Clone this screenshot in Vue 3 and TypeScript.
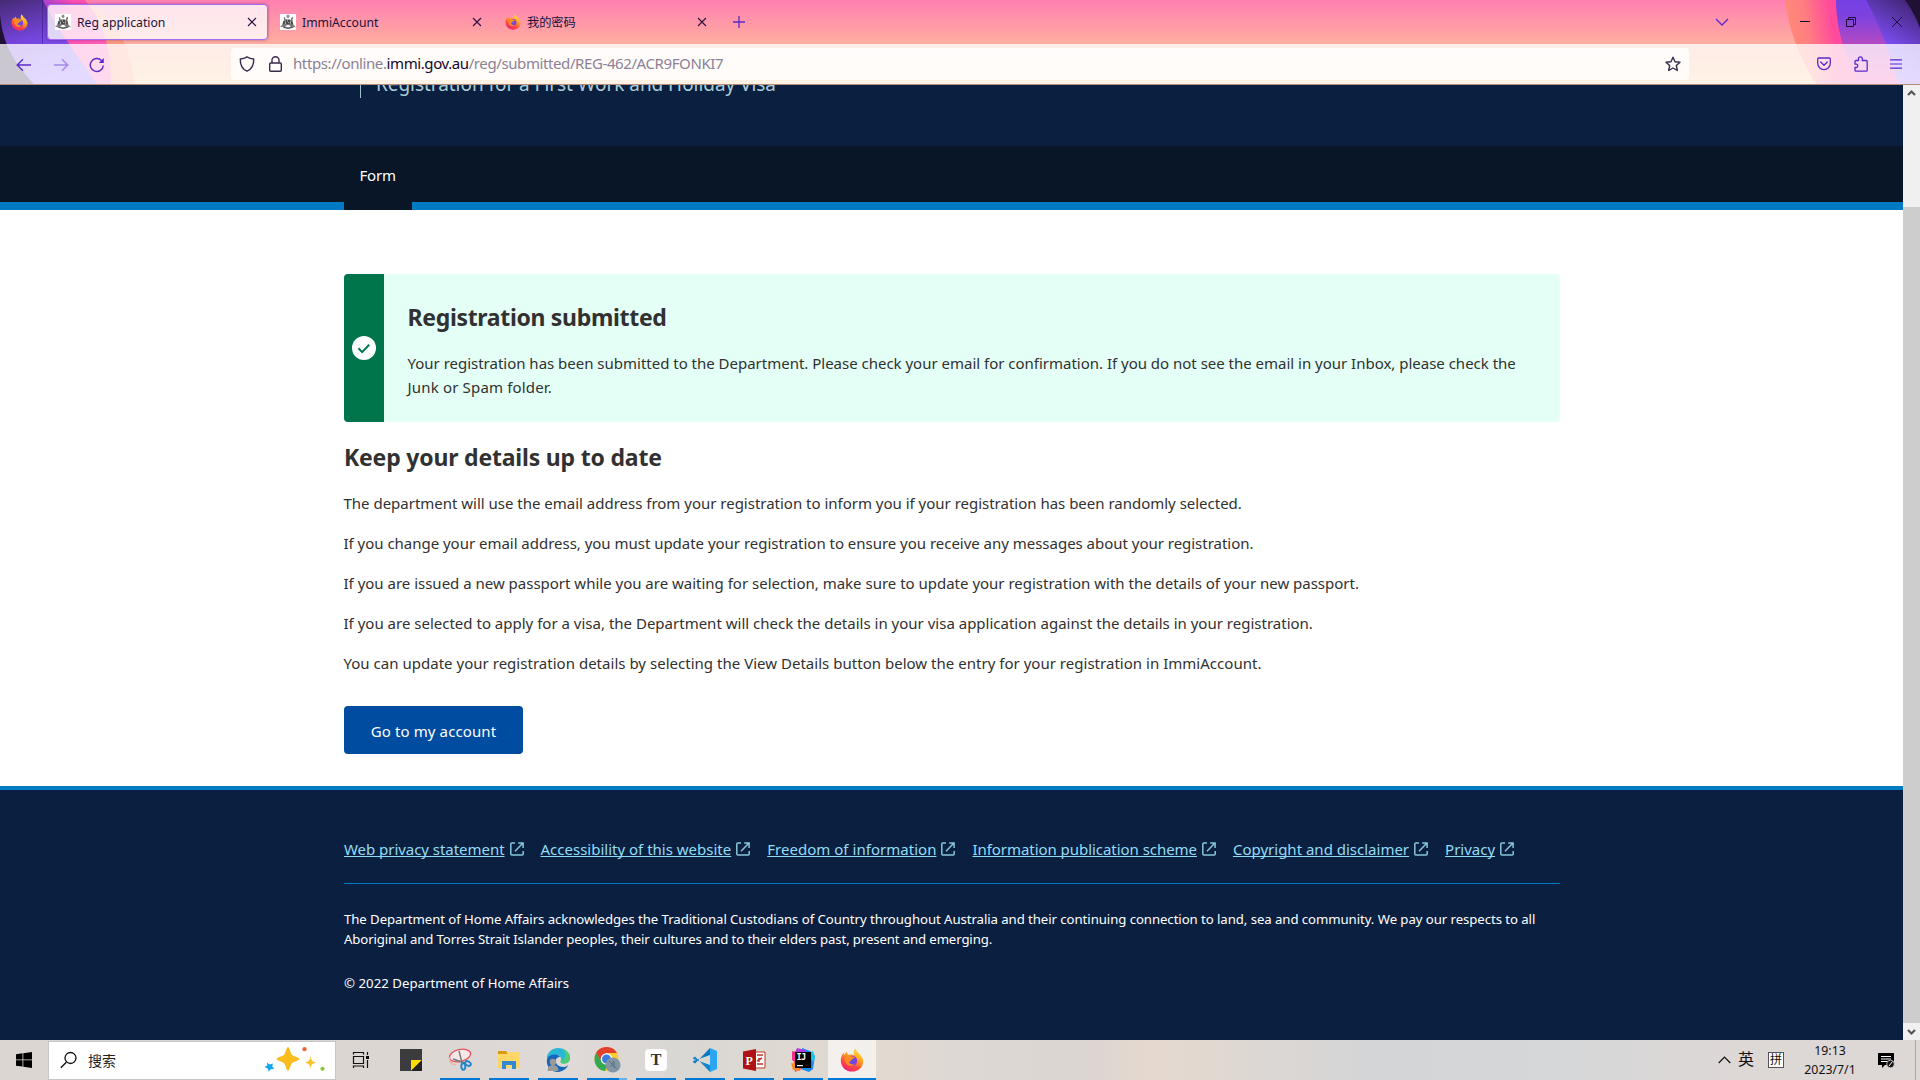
<script setup lang="ts">
interface Tab { title: string; kind: 'crest' | 'fox'; active?: boolean }
interface Item { text: string; cls: string }

const tabs: Tab[] = [
  { title: 'Reg application', kind: 'crest', active: true },
  { title: 'ImmiAccount', kind: 'crest' },
  { title: '我的密码', kind: 'fox' },
]

const paragraphs: Item[] = [
  { text: 'The department will use the email address from your registration to inform you if your registration has been randomly selected.', cls: 'p1' },
  { text: 'If you change your email address, you must update your registration to ensure you receive any messages about your registration.', cls: 'p2' },
  { text: 'If you are issued a new passport while you are waiting for selection, make sure to update your registration with the details of your new passport.', cls: 'p3' },
  { text: 'If you are selected to apply for a visa, the Department will check the details in your visa application against the details in your registration.', cls: 'p4' },
  { text: 'You can update your registration details by selecting the View Details button below the entry for your registration in ImmiAccount.', cls: 'p5' },
]

const links: Item[] = [
  { text: 'Web privacy statement', cls: 'l1' },
  { text: 'Accessibility of this website', cls: 'l2' },
  { text: 'Freedom of information', cls: 'l3' },
  { text: 'Information publication scheme', cls: 'l4' },
  { text: 'Copyright and disclaimer', cls: 'l5' },
  { text: 'Privacy', cls: 'l6' },
]
</script>

<template>
  <div class="screen">
    <svg class="defs" width="0" height="0" aria-hidden="true">
      <defs>
        <linearGradient id="foxBody" x1="0.8" y1="0" x2="0.3" y2="1">
          <stop offset="0" stop-color="#fff04a" /><stop offset="0.4" stop-color="#ffa320" />
          <stop offset="0.72" stop-color="#ff4a3e" /><stop offset="1" stop-color="#e81e80" />
        </linearGradient>
        <radialGradient id="foxGlobe"><stop offset="0" stop-color="#5b4fe8" /><stop offset="1" stop-color="#8a3fd8" /></radialGradient>
        <symbol id="fox" viewBox="0 0 24 24">
          <path fill="url(#foxBody)" d="M12 23.5C5.5 23.5.8 18.6.8 12.4c0-3.3 1.3-6 2.6-7.6l.9 2.4C5 5.500 5.800 4.400 7 3.500c0 1.500.6 2.600 1.600 3.400 2-.7 4.400-.4 5.600.4C13 4.500 13.700 1.800 15.500.2c.6 2.700 2.200 4 4 5.700 2.300 2.200 3.700 4.800 3.700 7.500 0 5.800-4.900 10.100-11.200 10.100z" />
          <circle cx="12" cy="12.800" r="5.200" fill="url(#foxGlobe)" />
          <path fill="#ff8a24" d="M4.500 9.500c2-2.500 5-2.600 7.500-1 1.200.1 2.600.2 3 .7-.4 1.300-2.500 1.600-3.300 2.200-.3 1.600-1.900 1.600-2.600 2.500.6 2 2.600 2.900 5.400 2.200-2 2.700-6.300 2.400-8.200-.3-1.300-1.800-2-4-1.800-6.300z" />
        </symbol>
        <symbol id="crest" viewBox="0 0 16 16">
          <path fill="#fff" d="M0 0h16v16H0z" />
          <path fill="#8c8c8c" d="M6.800 1.200L8 .6l1.200.6.3 1.500L8.500 4h-1l-1-1.300z" />
          <path fill="#777" d="M3.800 3l1.400.4.4 2L7 6v5l-2 1.500-2.500-.3L1.200 13 0 12.500l2-1.200.8-2.800 1.400-2z" />
          <path fill="#777" d="M12.200 2.800l-.9 1-.3 2L9 6v5l2 1.500 3 .2 1.500.8-.3-1.300-1.700-1.200L12.800 8l-.4-2.500.9-1.500z" />
          <path fill="#444" d="M6.200 5.500h3.600v4L8 11.300 6.200 9.500zM3.200 7.500l1.300-1 .3 3-1.600 1zM11.500 6.500l1.200 2v2l-1.500-.8z" />
          <path fill="#555" d="M1.500 12.600l3-.3L8 13.600l3.500-1.300 3 .5-2.200 1.300L8 15l-4-.9z" />
          <path fill="#d8d8d8" d="M7 6.300h.8v1.200H7zM8.300 8h.8v1h-.8zM5.200 8h.6v2h-.6zM10.300 7.500h.6v2h-.6zM5.500 12.600h1v.7h-1zM9.600 12.600h1v.7h-1z" />
        </symbol>
        <symbol id="ext" viewBox="0 0 14 14">
          <path fill="none" stroke="#86c5dc" stroke-width="1.500" d="M5 .9H1.800q-1 0-1 1v10q0 1 1 1h10.400q1 0 1-1V9M5 9.300L12.700 1.300M8.200.9h4.900v5" />
        </symbol>
      </defs>
    </svg>

    <header class="chrome">
      <svg class="theme" width="1920" height="84" viewBox="0 0 1920 84" aria-hidden="true">
        <defs>
          <linearGradient id="sky" x1="0" y1="0" x2="0" y2="1"><stop offset="0" stop-color="#ff80b2" /><stop offset="0.520" stop-color="#ffae9f" /><stop offset="1" stop-color="#ffc58a" /></linearGradient>
          <linearGradient id="violetL" x1="0" y1="0" x2="0.300" y2="1"><stop offset="0" stop-color="#452a74" /><stop offset="0.500" stop-color="#7544dc" /><stop offset="1" stop-color="#8a5cff" /></linearGradient>
          <linearGradient id="pinkL" x1="0" y1="0" x2="1" y2="0.600"><stop offset="0" stop-color="#a040d8" /><stop offset="0.350" stop-color="#ff4fb0" /><stop offset="1" stop-color="#ff62b8" /></linearGradient>
          <linearGradient id="orangeR" x1="0" y1="0.200" x2="1" y2="0"><stop offset="0" stop-color="#ff8a78" /><stop offset="0.250" stop-color="#ff7f80" /><stop offset="0.600" stop-color="#ff4a9c" /><stop offset="1" stop-color="#ff4aa4" /></linearGradient>
          <linearGradient id="violetR" x1="0" y1="0" x2="0" y2="1"><stop offset="0" stop-color="#7440e4" /><stop offset="0.200" stop-color="#7d42de" /><stop offset="0.550" stop-color="#b94ac0" /><stop offset="1" stop-color="#ff4ab0" /></linearGradient>
          <linearGradient id="deepR" x1="0.700" y1="0" x2="0.300" y2="1"><stop offset="0" stop-color="#44277a" /><stop offset="0.550" stop-color="#7a4cf0" /><stop offset="1" stop-color="#9f6cff" /></linearGradient>
        </defs>
        <path fill="url(#sky)" d="M0 0h1920v84H0z" />
        <path fill="#ff9a80" d="M60 0h25c25 15 47 42 49 84H60z" />
        <path fill="url(#pinkL)" d="M40 0h45c17 20 26 45 26 84H60z" />
        <path fill="url(#violetL)" d="M0 0h43C52 20 66 40 97 84H0z" />
        <path fill="#1f1134" d="M0 14c2 22 8 43 34 70H0z" />
        <path fill="#3b1d8c" opacity="0.600" d="M42 0h1v44h-1z" />
        <path fill="url(#orangeR)" d="M1785 0h60l15 84h-44C1795 50 1787 20 1785 0z" />
        <path fill="url(#violetR)" d="M1836 0h40l30 84h-46C1843 55 1836 25 1836 0z" />
        <path fill="url(#deepR)" d="M1866 0h54v84h-22C1888 45 1877 20 1866 0z" />
        <path fill="#1f1134" d="M1905 0h15v28q-5-14-15-28z" />
      </svg>
      <div class="tabstrip">
        <svg class="brand" width="17" height="17"><use href="#fox" /></svg>
        <div v-for="t in tabs" :key="t.title" class="tab" :class="{ active: t.active }">
          <svg class="fav" width="16" height="16"><use :href="'#' + t.kind" /></svg>
          <span class="tabname">{{ t.title }}</span>
          <svg class="x" width="10" height="10" viewBox="0 0 10 10"><path d="M1 1l8 8M9 1L1 9" fill="none" stroke="#2b1040" stroke-width="1.100" /></svg>
        </div>
        <svg class="plus" width="12" height="12" viewBox="0 0 12 12"><path d="M6 0v12M0 6h12" stroke="#592acb" stroke-width="1.300" /></svg>
        <svg class="chev" width="14" height="8" viewBox="0 0 14 8"><path d="M1 1l6 6 6-6" fill="none" stroke="#592acb" stroke-width="1.300" /></svg>
        <svg class="wc min" width="10" height="10" viewBox="0 0 10 10"><path d="M0 4.500h10" stroke="#1a0a30" /></svg>
        <svg class="wc" width="10" height="10" viewBox="0 0 10 10"><path d="M.5 2.500h7v7h-7zM2.500 2.500v-2h7v7h-2" fill="none" stroke="#1a0a30" /></svg>
        <svg class="wc" width="10" height="10" viewBox="0 0 10 10"><path d="M0 0l10 10M10 0L0 10" stroke="#1a0a30" stroke-width=".9" /></svg>
      </div>
      <div class="toolbar">
        <svg class="nav1" width="16" height="14" viewBox="0 0 16 14"><path d="M15 7H1.500M7 1.200L1.200 7 7 12.800" fill="none" stroke="#592acb" stroke-width="1.400" /></svg>
        <svg class="nav2" width="16" height="14" viewBox="0 0 16 14"><path d="M1 7h13.500M9 1.200L14.800 7 9 12.800" fill="none" stroke="#592acb" stroke-opacity="0.450" stroke-width="1.400" /></svg>
        <svg class="nav3" width="16" height="16" viewBox="0 0 16 16"><path d="M12.500 3.500A6.500 6.500 0 1 0 14.300 8.500" fill="none" stroke="#592acb" stroke-width="1.400" /><path d="M14.800 1v5H9.800z" fill="#592acb" /></svg>
        <div class="urlbar">
          <svg width="16" height="16" viewBox="0 0 16 16"><path d="M8 .9C6 2.300 4 2.900 1.300 3c-.2 5.300 1.500 10 6.700 12.200C13.200 13 14.900 8.300 14.700 3 12 2.900 10 2.300 8 .9z" fill="none" stroke="#3a2a4d" stroke-width="1.400" stroke-linejoin="round" /></svg>
          <svg class="lock" width="13" height="16" viewBox="0 0 13 16"><path d="M1.700 7h9.600q1 0 1 1v6.200q0 1-1 1H1.700q-1 0-1-1V8q0-1 1-1zM3 7V4.300a3.500 3.500 0 0 1 7 0V7" fill="none" stroke="#3a2a4d" stroke-width="1.400" /></svg>
          <span class="url">https://online.<b>immi.gov.au</b>/reg/submitted/REG-462/ACR9FONKI7</span>
          <svg class="star" width="16" height="16" viewBox="0 0 16 16"><path d="M8 1.200l2 4.500 5 .5-3.700 3.300 1 5L8 12l-4.300 2.500 1-5L1 6.200l5-.5z" fill="none" stroke="#3a2a4d" stroke-width="1.400" stroke-linejoin="round" /></svg>
        </div>
        <svg class="pocket" width="14" height="14" viewBox="0 0 14 14"><path d="M1.700 1h10.600q1 0 1 1v4.300a6.300 6.300 0 0 1-12.600 0V2q0-1 1-1zM3.700 5L7 8.200 10.300 5" fill="none" stroke="#592acb" stroke-width="1.300" stroke-linecap="round" stroke-linejoin="round" /></svg>
        <svg class="puzzle" width="14" height="16" viewBox="0 0 14 16"><path d="M1 8.200V5.500q0-1 1-1h2.500V2.800a1.800 1.800 0 0 1 3.800 0v1.700h3.900q1 0 1 1v8.700q0 1-1 1H2q-1 0-1-1v-2.700h1.500a1.700 1.700 0 0 0 0-3.300z" fill="none" stroke="#592acb" stroke-width="1.300" stroke-linejoin="round" /></svg>
        <svg class="menu" width="12" height="10" viewBox="0 0 12 10"><path d="M0 .8h12M0 5h12M0 9.200h12" stroke="#592acb" stroke-width="1.200" /></svg>
      </div>
    </header>

    <div class="viewport">
      <main class="page">
        <div class="masthead"><div class="mast-title"><span class="t-title">Registration for a First Work and Holiday Visa</span></div></div>
        <nav class="nav"><a class="navtab">Form</a></nav>
        <section class="content">
          <div class="alert">
            <div class="alert-icon">
              <svg width="24" height="24" viewBox="0 0 24 24"><circle cx="12" cy="12" r="12" fill="#fff" /><path d="M6.500 12.200l3.600 3.900 7.100-7.400" fill="none" stroke="#00754b" stroke-width="2" /></svg>
            </div>
            <div class="alert-body">
              <h2 class="h-a">Registration submitted</h2>
              <p><span class="a1">Your registration has been submitted to the Department. Please check your email for confirmation. If you do not see the email in your Inbox, please check the</span><br><span class="a2">Junk or Spam folder.</span></p>
            </div>
          </div>
          <h2 class="h-b">Keep your details up to date</h2>
          <div class="copy"><p v-for="p in paragraphs" :key="p.cls" :class="p.cls">{{ p.text }}</p></div>
          <button class="go">Go to my account</button>
        </section>
        <footer class="foot">
          <div class="inner">
            <div class="links">
              <span v-for="l in links" :key="l.cls" class="link"><a :class="l.cls">{{ l.text }}</a><svg width="14" height="14"><use href="#ext" /></svg></span>
            </div>
            <p class="ack"><span class="f1">The Department of Home Affairs acknowledges the Traditional Custodians of Country throughout Australia and their continuing connection to land, sea and community. We pay our respects to all</span><br><span class="f2">Aboriginal and Torres Strait Islander peoples, their cultures and to their elders past, present and emerging.</span></p>
            <p class="ack c"><span class="f3">© 2022 Department of Home Affairs</span></p>
          </div>
        </footer>
      </main>
      <aside class="scroll">
        <svg width="17" height="17" viewBox="0 0 17 17"><path d="M5 10l3.500-3.500L12 10" fill="none" stroke="#555" stroke-width="2.200" /></svg>
        <div class="track"><div class="thumb"></div></div>
        <svg width="17" height="17" viewBox="0 0 17 17"><path d="M5 7l3.500 3.500L12 7" fill="none" stroke="#555" stroke-width="2.200" /></svg>
      </aside>
    </div>

    <div class="taskbar">
      <div class="start"><svg width="16" height="16" viewBox="0 0 16 16"><path d="M0 2.200l6.500-.9v6.200H0zM7.300 1.200L16 0v7.500H7.300zM0 8.300h6.500v6.300L0 13.700zM7.300 8.300H16V16l-8.700-1.200z" /></svg></div>
      <div class="search">
        <svg width="18" height="18" viewBox="0 0 18 18"><path d="M6.300 11.200L.8 16.800" stroke="#111" stroke-width="1.400" /><circle cx="10.500" cy="7" r="5.500" fill="none" stroke="#111" stroke-width="1.300" /></svg>
        <span>搜索</span>
        <svg class="spark" width="62" height="26" viewBox="0 0 62 26">
          <path fill="#fbbd1e" d="M24 0c1.600 0 2 5.500 4 7.700 2 2 7.500 2.700 7.500 4.300s-5.500 2.300-7.500 4.300c-2 2.200-2.400 7.700-4 7.700s-2-5.500-4-7.700c-2-2-7.500-2.700-7.500-4.300s5.500-2.300 7.500-4.300c2-2.200 2.400-7.700 4-7.700z" />
          <path fill="#fbc233" d="M46.500 9.500c.9 3.800 1.500 4.900 5.500 6-4 1.100-4.600 2.200-5.500 6-.9-3.800-1.500-4.900-5.500-6 4-1.100 4.600-2.200 5.500-6z" />
          <path fill="#12a5ea" d="M3 15.500l2.500 2L9 16.500l-.8 3 2 2.500-3.500.3-2 2.200-1-3L.5 20l2.700-1.500z" />
          <circle cx="40.500" cy="2.200" r="2.100" fill="#f26430" /><circle cx="58.500" cy="21.800" r="2.100" fill="#8ac740" />
        </svg>
      </div>
      <div class="app plain"><svg width="18" height="18" viewBox="0 0 18 18"><path d="M1.500 3.500v-2h10v2M1.500 5.500h10v7h-10zM1.500 17v-2h10v2M15.500 1v3M15.500 9v8" fill="none" stroke="#111" stroke-width="1.200" /><path d="M14 5h3v3h-3z" /></svg></div>
      <div class="app plain note"><svg width="22" height="22" viewBox="0 0 22 22"><path fill="#3c3c3e" d="M0 0h22v22H0z" /><path fill="#ffdc00" d="M11 11h11L11 22z" /><path fill="#222" d="M22 11v11H11z" /></svg></div>
      <div class="app"><svg width="24" height="24" viewBox="0 0 24 24"><ellipse cx="12" cy="7.500" rx="10.800" ry="6" transform="rotate(-14 12 7.500)" fill="#f6e8e8" stroke="#e3555c" stroke-width="1.300" /><path d="M2 9q-2 7 6 8" fill="none" stroke="#efb0b0" stroke-width="1.500" /><path d="M5 11l12 4M11 3l3 12" stroke="#777" stroke-width="1.400" /><g fill="none" stroke="#1f86cf" stroke-width="1.900"><ellipse cx="15.300" cy="18.500" rx="2" ry="3.200" /><ellipse cx="20" cy="15.500" rx="3" ry="2" transform="rotate(30 20 15.500)" /></g></svg></div>
      <div class="app"><svg width="22" height="20" viewBox="0 0 22 20"><path fill="#d79a10" d="M0 1h8l2 3H0z" /><path fill="#ffd766" d="M0 4h9l1-2h12v16H0z" /><path fill="#3488d0" d="M4 19v-8h14v8h-4v-4H8v4z" /></svg></div>
      <div class="app"><svg width="24" height="24" viewBox="0 0 24 24"><path fill="#1567b8" d="M1 11C3 4 11 4 14 9c-5 0-6 6-1 9 4 2 7 1 9.500-1C19 23 14 24 11 24 4 23.500 0 18 1 11z" /><path fill="#29b7d8" d="M.6 10C1.500 4 6.500 0 12 0c7 0 12 5 12 9.500 0 4-3 6-6 6-3.500 0-4-1.500-3-3 1-4-3-6.500-7-6-4 .5-6 2-7.400 3.500z" /><path fill="#4ccf72" d="M17 1.200c5 2 7 5.500 7 8.500 0 4-3 5.800-6 5.800-3.500 0-4-1.500-3-3C21 11 20 5 17 1.200z" /><circle cx="7" cy="14" r="3.200" fill="#9a9a98" /><path fill="#9a9a98" d="M1.500 23q0-6 5.500-6t5.500 6z" /></svg></div>
      <div class="app two"><svg width="27" height="26" viewBox="0 0 27 26"><circle cx="12.500" cy="12" r="12" fill="#fc3" /><path fill="#e2402f" d="M2 6C6-2 19-2 23 6H12.500L7 14z" /><path fill="#35a852" d="M2 6l6 9 6 2-3 7C2 23-2 13 2 6z" /><circle cx="12.500" cy="12" r="5.800" fill="#fff" /><circle cx="12.500" cy="12" r="4.500" fill="#3a7de0" /><circle cx="19" cy="18" r="7.600" fill="#8296a6" /><path d="M15 14l8 8M17 20l3-6M20 15v6" stroke="#5d7080" /></svg></div>
      <div class="app"><div class="typora">T</div></div>
      <div class="app"><svg width="24" height="24" viewBox="0 0 24 24"><path fill="#0a78c2" d="M17 0L2 15.500l-1.700-1.300q-.5-.6 0-1.300L17 7z" /><path fill="#1485d2" d="M17 24L2 8.500.3 9.800q-.5.600 0 1.300L17 17z" /><path fill="#2ba6f2" d="M17 0l6.300 2.800q.7.400.7 1.200v16q0 .8-.7 1.200L17 24z" /></svg></div>
      <div class="app"><svg width="23" height="22" viewBox="0 0 23 22"><path fill="#fff" stroke="#c03528" d="M12 3h10v16H12z" /><path d="M14 6h6M14 15h6M16 9v4M14 12l5-3" stroke="#c03528" stroke-width="1.500" /><path fill="#b01116" d="M0 2.500L13 0v22L0 19.500z" /><text x="2.500" y="15.500" fill="#fff" font-size="12" font-weight="700" font-family="Liberation Serif, serif">P</text></svg></div>
      <div class="app"><svg width="24" height="24" viewBox="0 0 24 24"><path fill="#fb5a58" d="M1 5l6-4 4 3v17l-7 3-1-9z" /><path fill="#f72d92" d="M1 3l6 2-3 9-3-2z" /><path fill="#fb8a28" d="M0 15l6 1 3 7-7-1z" /><path fill="#1a8af7" d="M11 0l8 3 5 5-2 13-4 3-8-3z" /><path fill="#21c3e8" d="M17 5l5-2 2 7-2 4z" /><path fill="#b53be0" d="M6 0l8 2 1 3H4z" /><path d="M4 4h16v16H4z" /><path fill="#fff" d="M6 17h6v1.200H6z" /><text x="5.500" y="11.500" fill="#fff" font-size="8.500" font-weight="700" font-family="DejaVu Sans Mono, monospace" letter-spacing="-.5">IJ</text></svg></div>
      <div class="app current"><svg width="24" height="24"><use href="#fox" /></svg></div>
      <div class="tray">
        <svg class="up" width="13" height="8" viewBox="0 0 13 8"><path d="M.7 7l5.800-6 5.800 6" fill="none" stroke="#111" stroke-width="1.200" /></svg>
        <span class="lang">英</span>
        <span class="ime">拼</span>
        <div class="clock"><span class="time">19:13</span><span class="date">2023/7/1</span></div>
        <svg class="notif" width="17" height="17" viewBox="0 0 17 17"><path d="M0 1h16v12H7l-3 3v-3H0z" /><path d="M3 4.500h10M3 7h10M3 9.500h6" stroke="#fff" /><circle cx="12.500" cy="12" r="3.800" fill="#111" stroke="#dcd8d7" stroke-width=".8" /><path d="M11 14l3.500-4.500" stroke="#fff" /></svg>
        <i class="peek"></i>
      </div>
    </div>
  </div>
</template>

<style>
html, body { margin: 0; overflow: hidden; }
</style>

<style scoped>
.screen { width: 1920px; height: 1080px; display: flex; flex-direction: column; overflow: hidden; font-family: "Noto Sans", "Noto Sans CJK SC", sans-serif; color: #313131; }
.screen * { box-sizing: border-box; }
.screen svg { display: block; flex: none; }
.screen svg.defs { position: absolute; }
h2, p { margin: 0; font-weight: 400; white-space: nowrap; }

.chrome { position: relative; height: 85px; flex: none; border-bottom: 1px solid #b58c7c; }
.theme { position: absolute; left: 0; top: 0; }
.tabstrip { position: relative; height: 44px; display: flex; align-items: center; padding: 0 7px 0 11px; }
.brand { margin-right: 19px; }
.tab { width: 221px; height: 36px; margin-right: 4px; padding: 0 11px 0 8px; display: flex; align-items: center; border-radius: 4px; }
.tab.active { background: rgba(255, 255, 255, 0.78); border: 1.500px solid #a66cf4; box-shadow: 0 0 3px rgba(80, 20, 120, 0.5); padding: 0 10px 0 7px; }
.fav { margin-right: 6px; }
.tabname { flex: 1; padding-top: 2px; font-size: 12.200px; color: #20123a; line-height: 20px; }
.plus { margin-left: 11px; }
.chev { margin-left: auto; margin-right: 71px; }
.wc { margin-right: 36px; }
.wc:last-child { margin-right: 11px; }
.toolbar { position: relative; height: 40px; display: flex; align-items: center; background: rgba(255, 255, 255, 0.77); padding-left: 16px; }
.nav1, .nav2, .nav3 { margin-top: 1px; }
.nav2 { margin-left: 21px; }
.nav3 { margin-left: 20px; }
.urlbar { width: 1458px; height: 32px; margin-left: 126px; padding: 0 8px; display: flex; align-items: center; border-radius: 4px; background: rgba(255, 255, 255, 0.8); }
.lock { margin-left: 14px; }
.url { flex: 1; margin-left: 11px; padding-bottom: 2px; font-size: 15px; letter-spacing: -0.400px; color: #8b8296; }
.url b { font-weight: 400; color: #15062c; }
.pocket { margin-left: 128px; }
.puzzle { margin-left: 23px; }
.menu { margin-left: 22px; }

.viewport { height: 955px; flex: none; display: flex; }
.page { width: 1903px; background: #fff; }
.masthead { height: 61px; overflow: hidden; background: #0b2041; padding-left: 360px; }
.mast-title { height: 28px; margin-top: -15px; padding-left: 15px; border-left: 1px solid #9cc4d0; font-size: 19px; letter-spacing: -0.050px; line-height: 28px; color: #a9cdd6; white-space: nowrap; }
.nav { height: 64px; background: #091628; border-bottom: 8px solid #007ac3; padding-left: 344px; }
.navtab { display: block; width: 68px; height: 64px; padding-left: 15.500px; background: #091628; color: #fff; font-size: 15px; letter-spacing: -0.200px; line-height: 58px; }
.content { height: 576px; width: 1560px; padding: 64px 0 0 344px; font-size: 15px; line-height: 24px; }
.alert { display: flex; height: 148px; background: #e3fff6; border-radius: 4px; overflow: hidden; }
.alert-icon { width: 40px; display: flex; align-items: center; justify-content: center; background: #00754b; }
.alert-body { padding: 27px 0 0 23.500px; }
h2 { font-size: 23px; line-height: 32px; font-weight: 700; }
.h-a { letter-spacing: -0.320px; }
.h-b { margin-top: 19px; letter-spacing: -0.190px; }
.alert-body p { margin-top: 18px; }
.a1 { letter-spacing: -0.011px; }
.a2 { letter-spacing: 0.170px; }
.copy { margin: 18px 0 0 -0.500px; display: flex; flex-direction: column; align-items: flex-start; gap: 16px; }
.p1 { letter-spacing: -0.010px; }
.p2 { letter-spacing: -0.022px; }
.p3 { letter-spacing: -0.006px; }
.p4 { letter-spacing: 0.004px; }
.p5 { letter-spacing: 0.022px; }
.go { display: block; width: 179px; height: 48px; margin-top: 31px; padding: 1px 0 0; border: 0; border-radius: 4px; background: #004ca0; color: #fff; font: 15px "Noto Sans", sans-serif; letter-spacing: 0.120px; }
.foot { height: 254px; border-top: 4px solid #007ac3; background: #0b2041; color: #fff; padding: 47px 0 0 344px; }
.inner { width: 1216px; }
.links { height: 47px; display: flex; gap: 17px; border-bottom: 1px solid #007ac3; font-size: 15px; line-height: 24px; color: #92dcf5; }
.link { display: flex; height: 24px; align-items: center; white-space: nowrap; }
.link a { text-decoration: underline; text-underline-offset: 1px; text-decoration-skip-ink: none; }
.link svg { margin-left: 5px; }
.l1 { letter-spacing: -0.040px; }
.l3 { letter-spacing: 0.030px; }
.l4 { letter-spacing: -0.050px; }
.ack { margin-top: 25px; font-size: 13.200px; line-height: 20px; }
.ack.c { margin-top: 24px; }
.f1 { letter-spacing: -0.064px; }
.f2 { letter-spacing: -0.120px; }
.f3 { letter-spacing: 0.040px; }

.scroll { width: 17px; background: #f0f0f0; display: flex; flex-direction: column; }
.track { flex: 1; padding-top: 105px; }
.thumb { height: 816px; background: #cdcdcd; }

.taskbar { height: 40px; flex: none; display: flex; align-items: center; background: linear-gradient(90deg, #dcd6d2 0, #dcd6d2 20%, #dfd9d8 30%, #d9d7d4 35%, #e2dad0 46%, #ddd8d3 50%, #dcd5d2 57%, #e5d9cf 60%, #d3d5d7 72%, #d6d7d8 82%, #ddd7d6 90%, #ddd7d6 100%); }
.start { width: 48px; display: flex; justify-content: center; }
.search { width: 288px; height: 39px; display: flex; align-items: center; padding: 0 9px 0 11px; background: #fff; border: 1px solid #c6c6c6; font-size: 14px; color: #222; }
.search span { margin-left: 10px; }
.spark { margin-left: auto; }
.app { width: 40px; height: 40px; margin-right: 9px; padding-top: 2px; display: flex; align-items: center; justify-content: center; border-bottom: 2px solid #0078d7; }
.app.plain { border-bottom-color: transparent; margin: 0 6px 0 5px; }
.app.note { margin: 0 9px 0 4px; }
.app.two { border-image: linear-gradient(90deg, #0078d7 78%, #6cb0e6 78%) 1; border-width: 0 0 2px; border-style: solid; }
.app.current { width: 48px; margin: 0 0 0 -4px; background: rgba(255, 255, 255, 0.6); }
.typora { width: 22px; height: 22px; border-radius: 4px; background: #fdfdfd; color: #333; text-align: center; font: 700 16px/22px "Liberation Serif", serif; }
.tray { margin-left: auto; display: flex; align-items: center; height: 40px; color: #111; }
.lang { margin-left: 7px; padding-bottom: 2px; font-size: 16px; line-height: 20px; }
.ime { width: 16px; height: 16px; margin-left: 14px; border: 1px solid #555; background: #fff; font-size: 12px; line-height: 14px; text-align: center; }
.clock { width: 80px; margin-left: 6px; display: flex; flex-direction: column; align-items: center; font-size: 12.300px; line-height: 19px; }
.notif { margin-left: 8px; }
.peek { width: 1px; height: 40px; margin: 0 4px 0 20px; background: #aaa5a4; }
</style>
